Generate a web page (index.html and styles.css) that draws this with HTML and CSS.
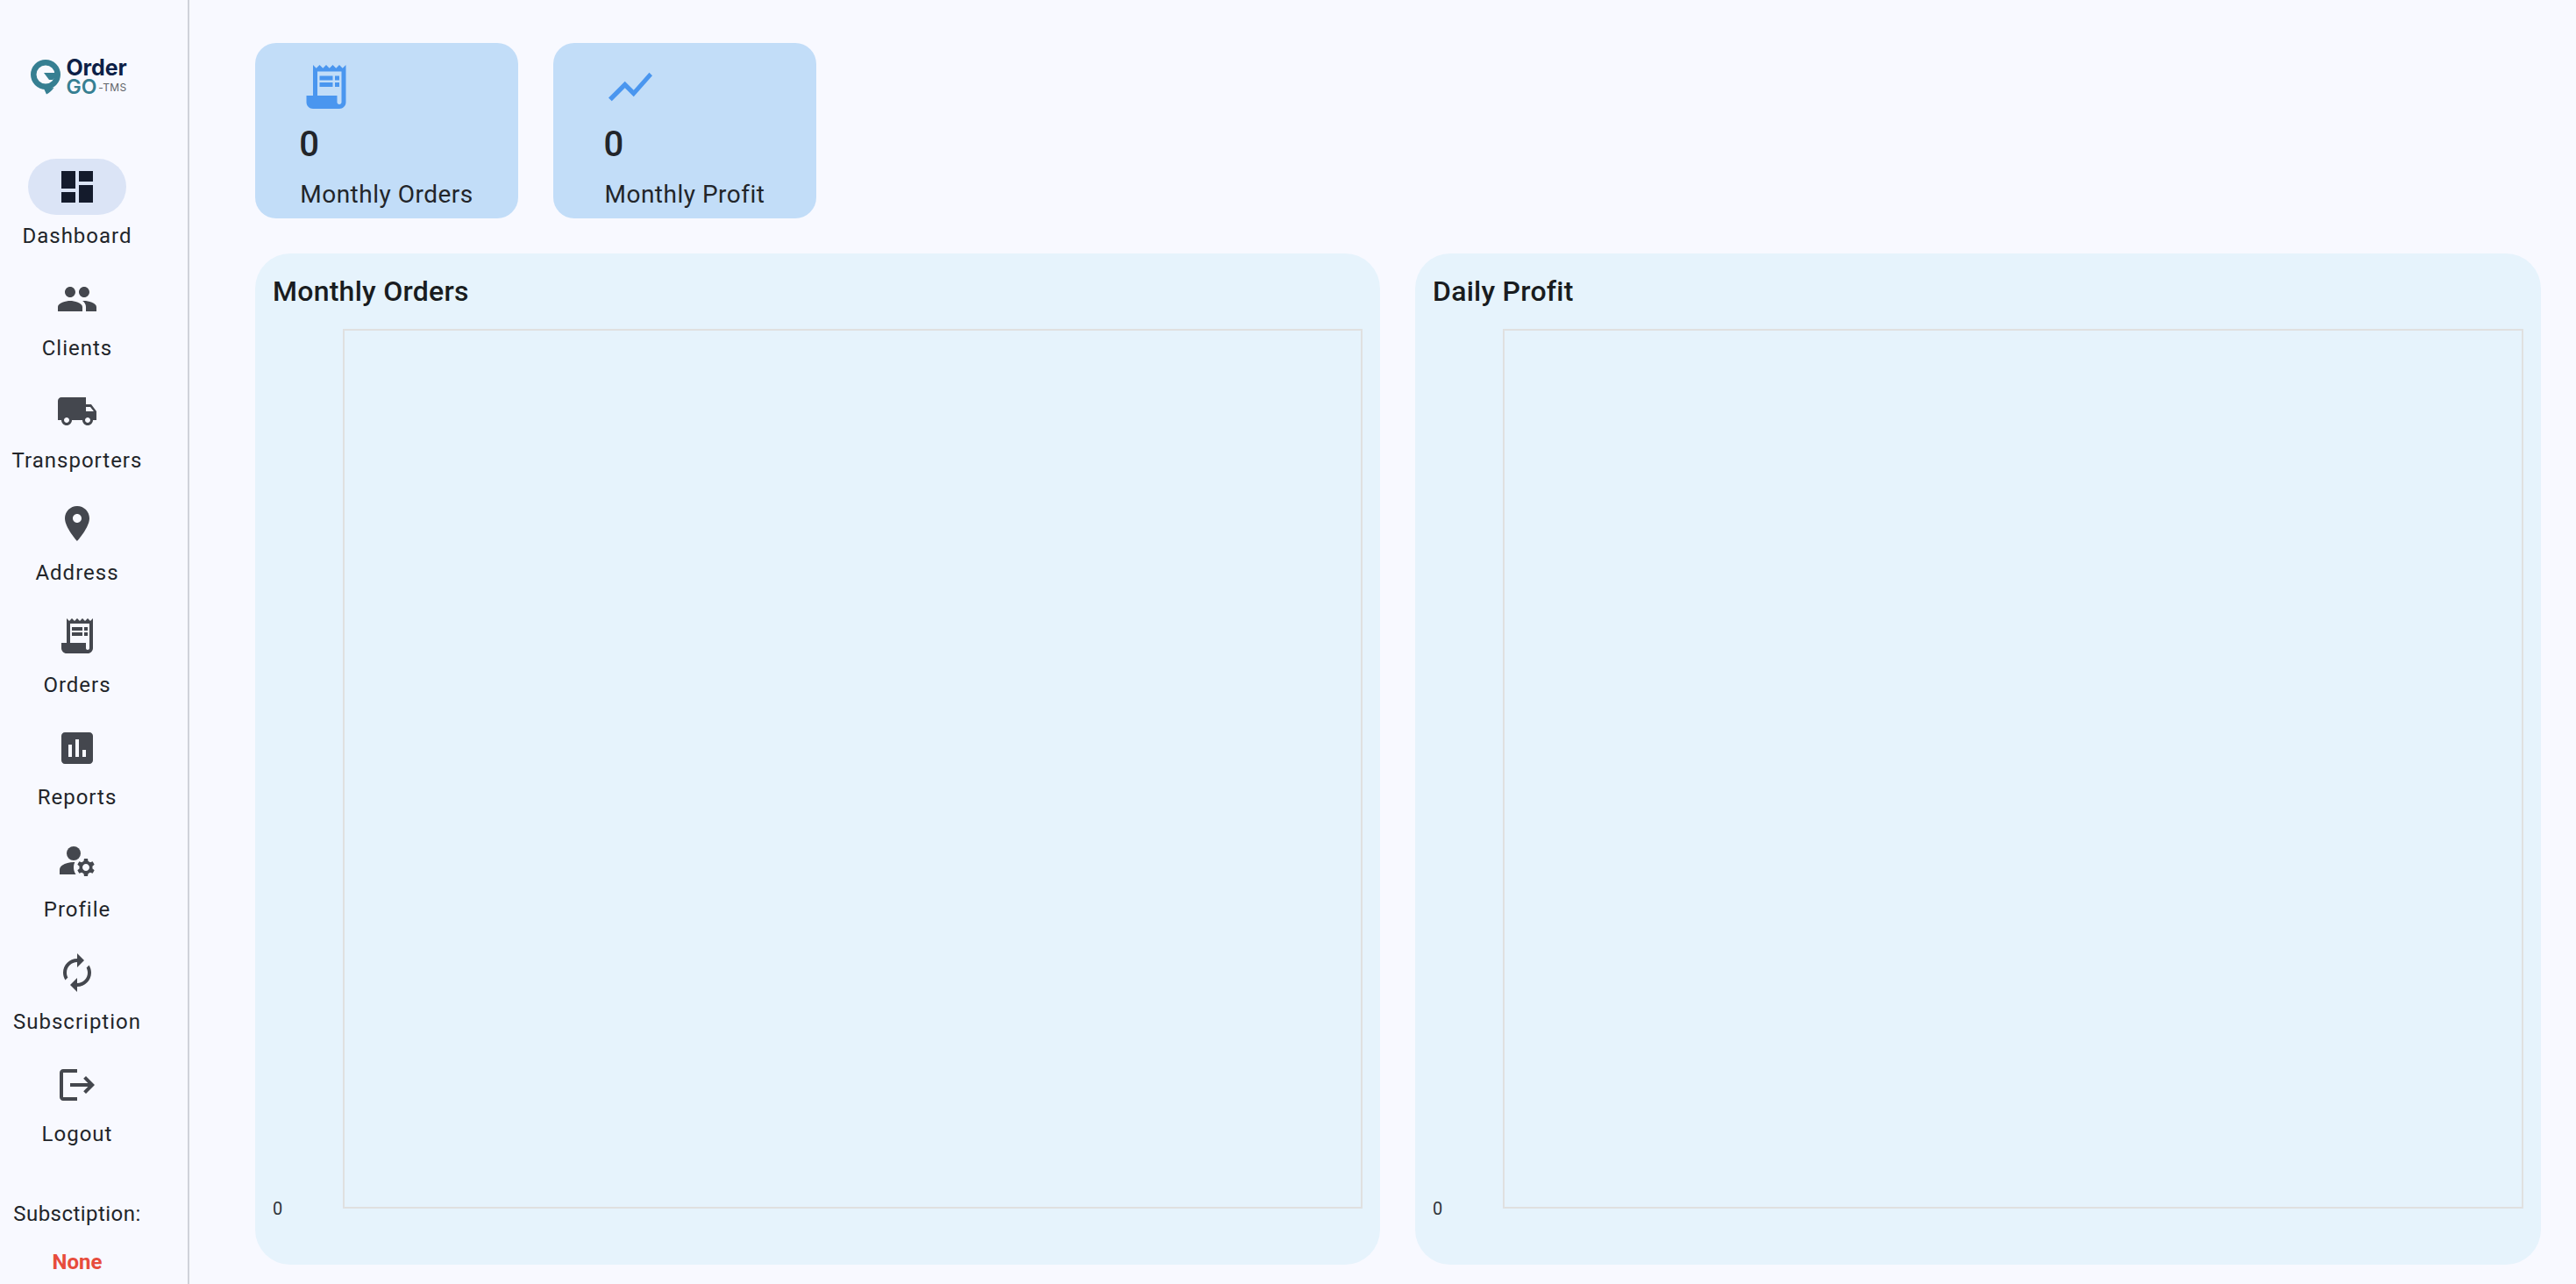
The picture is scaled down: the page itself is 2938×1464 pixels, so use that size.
FILE: index.html
```html
<!DOCTYPE html>
<html lang="en">
<head>
    <meta charset="UTF-8">
    <meta name="viewport" content="width=device-width, initial-scale=1.0">
    <title>OrderGo TMS</title>
    <link rel="stylesheet" href="styles.css">
</head>
<body>
    <div class="app">
        <nav class="rail">
            <div class="logo">
                <svg class="logo-mark" viewBox="0 0 34 40">
                    <path fill-rule="evenodd" d="M17 0a17 17 0 1 1 0 34a17 17 0 1 1 0-34zM17 6.500a10.500 10.500 0 1 0 0 21a10.500 10.500 0 1 0 0-21z"/>
                    <path d="M15 15h16v3l-6 5h-4zM15 33l3 6.500c3-1.500 6-4 8.500-7.500z"/>
                </svg>
                <div class="logo-text">
                    <div class="logo-order">Order</div>
                    <div class="logo-go">GO<span class="logo-tms">-TMS</span></div>
                </div>
            </div>

            <a class="nav-item">
                <span class="nav-icon active"><svg viewBox="0 0 24 24"><path d="M3 13h8V3H3v10zm0 8h8v-6H3v6zm10 0h8V11h-8v10zm0-18v6h8V3h-8z"/></svg></span>
                <span class="nav-label">Dashboard</span>
            </a>
            <a class="nav-item">
                <span class="nav-icon"><svg viewBox="0 0 24 24"><path d="M16 11c1.660 0 2.990-1.340 2.990-3S17.660 5 16 5c-1.660 0-3 1.340-3 3s1.340 3 3 3zm-8 0c1.660 0 2.990-1.340 2.990-3S9.660 5 8 5C6.340 5 5 6.340 5 8s1.340 3 3 3zm0 2c-2.330 0-7 1.170-7 3.500V19h14v-2.500c0-2.330-4.670-3.500-7-3.500zm8 0c-.29 0-.62.020-.97.050 1.160.84 1.970 1.970 1.970 3.450V19h6v-2.500c0-2.330-4.670-3.500-7-3.500z"/></svg></span>
                <span class="nav-label">Clients</span>
            </a>
            <a class="nav-item">
                <span class="nav-icon"><svg viewBox="0 0 24 24"><path d="M20 8h-3V4H3c-1.100 0-2 .9-2 2v11h2c0 1.660 1.340 3 3 3s3-1.340 3-3h6c0 1.660 1.340 3 3 3s3-1.340 3-3h2v-5l-3-4zM6 18.500c-.83 0-1.500-.67-1.500-1.500s.67-1.500 1.500-1.500 1.500.67 1.500 1.500-.67 1.500-1.500 1.500zm13.500-9l1.960 2.500H17V9.500h2.500zm-1.500 9c-.83 0-1.500-.67-1.500-1.500s.67-1.500 1.500-1.500 1.500.67 1.500 1.500-.67 1.500-1.500 1.500z"/></svg></span>
                <span class="nav-label">Transporters</span>
            </a>
            <a class="nav-item">
                <span class="nav-icon"><svg viewBox="0 0 24 24"><path d="M12 2C8.130 2 5 5.130 5 9c0 5.250 7 13 7 13s7-7.750 7-13c0-3.870-3.130-7-7-7zm0 9.500c-1.380 0-2.500-1.120-2.500-2.500s1.120-2.500 2.500-2.500 2.500 1.120 2.500 2.500-1.120 2.500-2.500 2.500z"/></svg></span>
                <span class="nav-label">Address</span>
            </a>
            <a class="nav-item">
                <span class="nav-icon"><svg viewBox="0 0 24 24"><path d="M19.500 3.500L18 2l-1.500 1.500L15 2l-1.500 1.500L12 2l-1.500 1.500L9 2 7.500 3.500 6 2v14H3v3c0 1.660 1.340 3 3 3h12c1.660 0 3-1.340 3-3V2l-1.500 1.500zM19 19c0 .55-.45 1-1 1s-1-.45-1-1v-3H8V5h11v14z"/><path d="M9 7h6v2H9zm7 0h2v2h-2zm-7 3h6v2H9zm7 0h2v2h-2z"/></svg></span>
                <span class="nav-label">Orders</span>
            </a>
            <a class="nav-item">
                <span class="nav-icon"><svg viewBox="0 0 24 24"><path d="M19 3H5c-1.100 0-2 .9-2 2v14c0 1.100.9 2 2 2h14c1.100 0 2-.9 2-2V5c0-1.100-.9-2-2-2zM9 17H7v-7h2v7zm4 0h-2V7h2v10zm4 0h-2v-4h2v4z"/></svg></span>
                <span class="nav-label">Reports</span>
            </a>
            <a class="nav-item">
                <span class="nav-icon"><svg viewBox="0 0 24 24"><circle cx="10" cy="8" r="4"/><path d="M10.670 13.020C10.450 13.010 10.230 13 10 13c-2.420 0-4.680.67-6.610 1.820-.88.52-1.390 1.500-1.390 2.530V20h9.260c-.79-1.130-1.260-2.510-1.260-4 0-1.070.25-2.070.67-2.980z"/><path d="M20.750 16c0-.22-.03-.42-.06-.63l1.140-1.010-1-1.730-1.450.49c-.32-.27-.68-.48-1.080-.63L18 11h-2l-.3 1.490c-.4.15-.76.36-1.080.63l-1.450-.49-1 1.730 1.140 1.010c-.03.21-.06.41-.06.63s.03.42.06.63l-1.140 1.010 1 1.730 1.450-.49c.32.27.68.48 1.080.63L16 21h2l.3-1.490c.4-.15.76-.36 1.080-.63l1.450.49 1-1.730-1.140-1.010c.03-.21.06-.41.06-.63zM17 18c-1.100 0-2-.9-2-2s.9-2 2-2 2 .9 2 2-.9 2-2 2z"/></svg></span>
                <span class="nav-label">Profile</span>
            </a>
            <a class="nav-item">
                <span class="nav-icon"><svg viewBox="0 0 24 24"><path d="M12 6v3l4-4-4-4v3c-4.420 0-8 3.580-8 8 0 1.570.46 3.030 1.240 4.260L6.700 14.800c-.45-.83-.7-1.790-.7-2.800 0-3.310 2.690-6 6-6zm6.760 1.740L17.300 9.200c.44.84.7 1.790.7 2.800 0 3.310-2.690 6-6 6v-3l-4 4 4 4v-3c4.420 0 8-3.580 8-8 0-1.570-.46-3.030-1.240-4.260z"/></svg></span>
                <span class="nav-label">Subscription</span>
            </a>
            <a class="nav-item">
                <span class="nav-icon"><svg viewBox="0 0 24 24"><path d="M17 7l-1.410 1.410L18.170 11H8v2h10.170l-2.580 2.580L17 17l5-5zM4 5h8V3H4c-1.100 0-2 .9-2 2v14c0 1.100.9 2 2 2h8v-2H4V5z"/></svg></span>
                <span class="nav-label">Logout</span>
            </a>

            <div class="plan">
                <div class="plan-title">Subsctiption:</div>
                <div class="plan-value">None</div>
            </div>
        </nav>

        <main class="content">
            <div class="stats">
                <div class="stat-card">
                    <div class="stat-inner">
                        <svg class="stat-icon" viewBox="0 0 24 24"><path d="M19.500 3.500L18 2l-1.500 1.500L15 2l-1.500 1.500L12 2l-1.500 1.500L9 2 7.500 3.500 6 2v14H3v3c0 1.660 1.340 3 3 3h12c1.660 0 3-1.340 3-3V2l-1.500 1.500zM19 19c0 .55-.45 1-1 1s-1-.45-1-1v-3H8V5h11v14z"/><path d="M9 7h6v2H9zm7 0h2v2h-2zm-7 3h6v2H9zm7 0h2v2h-2z"/></svg>
                        <div class="stat-value">0</div>
                        <div class="stat-label">Monthly Orders</div>
                    </div>
                </div>
                <div class="stat-card">
                    <div class="stat-inner">
                        <svg class="stat-icon" viewBox="0 0 24 24"><path d="M3.500 18.490l6-6.010 4 4L22 6.920l-1.410-1.410-7.090 7.970-4-4L2 16.990z"/></svg>
                        <div class="stat-value">0</div>
                        <div class="stat-label">Monthly Profit</div>
                    </div>
                </div>
            </div>

            <div class="charts">
                <section class="chart-panel">
                    <h2 class="chart-title">Monthly Orders</h2>
                    <div class="chart-body">
                        <div class="y-axis"><span class="y-tick">0</span></div>
                        <div class="plot"></div>
                    </div>
                </section>
                <section class="chart-panel">
                    <h2 class="chart-title">Daily Profit</h2>
                    <div class="chart-body">
                        <div class="y-axis"><span class="y-tick">0</span></div>
                        <div class="plot"></div>
                    </div>
                </section>
            </div>
        </main>
    </div>
</body>
</html>
```

FILE: styles.css
```css
* {
    box-sizing: border-box;
}
body {
    margin: 0;
    font-family: Roboto, sans-serif;
    background-color: #f8f9ff;
    color: #22252a;
    overflow: hidden;
}
.app {
    display: flex;
    height: 100vh;
}

/* side rail */
.rail {
    width: 216px;
    flex-shrink: 0;
    border-right: 2px solid #cfd2da;
    padding-right: 38px;
    display: flex;
    flex-direction: column;
    align-items: center;
    overflow: hidden;
}
.logo {
    display: flex;
    align-items: flex-start;
    gap: 6px;
    height: 181px;
    padding-top: 68px;
    margin-left: 4px;
    flex-shrink: 0;
}
.logo-mark {
    width: 34px;
    height: 40px;
    fill: #367f92;
    flex-shrink: 0;
}
.logo-text {
    font-family: Inter, sans-serif;
    font-weight: 700;
}
.logo-order {
    color: #0d1f47;
    font-size: 25px;
    line-height: 22px;
    margin-top: -2px;
    letter-spacing: -0.1px;
}
.logo-go {
    color: #367f92;
    font-size: 23px;
    line-height: 22px;
    font-weight: 600;
}
.logo-tms {
    color: #5f6368;
    font-size: 12px;
    font-weight: 400;
    margin-left: 2px;
    vertical-align: 3px;
    letter-spacing: 0.3px;
}
.nav-item {
    width: 100%;
    height: 128px;
    flex-shrink: 0;
    display: flex;
    flex-direction: column;
    align-items: center;
}
.nav-icon {
    width: 112px;
    height: 64px;
    border-radius: 32px;
    display: flex;
    align-items: center;
    justify-content: center;
    flex-shrink: 0;
}
.nav-icon.active {
    background-color: #dbe4f6;
}
.nav-icon svg {
    width: 48px;
    height: 48px;
    fill: #44474e;
}
.nav-icon.active svg {
    fill: #141b2c;
}
.nav-label {
    font-size: 24px;
    line-height: 32px;
    letter-spacing: 1px;
    margin-top: 8px;
    white-space: nowrap;
}
.plan {
    margin-top: auto;
    text-align: center;
    white-space: nowrap;
}
.plan-title {
    font-size: 24px;
    line-height: 32px;
    letter-spacing: 0.45px;
}
.plan-value {
    font-size: 24px;
    line-height: 32px;
    font-weight: 700;
    color: #e74c3c;
    margin-top: 23px;
    margin-bottom: 9px;
}

/* main area */
.content {
    flex: 1;
    min-width: 0;
    padding: 49px 40px 22px 75px;
    display: flex;
    flex-direction: column;
    gap: 40px;
}
.stats {
    display: flex;
    gap: 40px;
}
.stat-card {
    width: 300px;
    height: 200px;
    border-radius: 24px;
    background-color: #c2ddf8;
    display: flex;
    justify-content: center;
}
.stat-inner {
    padding-top: 20px;
}
.stat-icon {
    display: block;
    width: 60px;
    height: 60px;
    fill: #4a96ef;
}
.stat-value {
    font-size: 40px;
    line-height: 48px;
    font-weight: 500;
    margin-top: 12px;
    margin-left: -1px;
}
.stat-label {
    font-size: 28px;
    line-height: 40px;
    letter-spacing: 0.5px;
    margin-top: 13px;
}
.charts {
    flex: 1;
    min-height: 0;
    display: grid;
    grid-template-columns: 1283px 1fr;
    gap: 40px;
}
.chart-panel {
    min-width: 0;
    border-radius: 40px;
    background-color: #e6f3fc;
    padding: 20px 20px 64px 20px;
    display: flex;
    flex-direction: column;
}
.chart-title {
    margin: 0 0 20px 0;
    font-size: 32px;
    line-height: 46px;
    font-weight: 500;
    letter-spacing: 0.25px;
    color: #191c20;
}
.chart-body {
    flex: 1;
    min-height: 0;
    display: flex;
}
.y-axis {
    width: 80px;
    flex-shrink: 0;
    display: flex;
    align-items: flex-end;
}
.y-tick {
    font-size: 20px;
    line-height: 24px;
    margin-bottom: -12px;
    color: #30343a;
}
.plot {
    flex: 1;
    border: 2px solid #e0e0e0;
}
```
